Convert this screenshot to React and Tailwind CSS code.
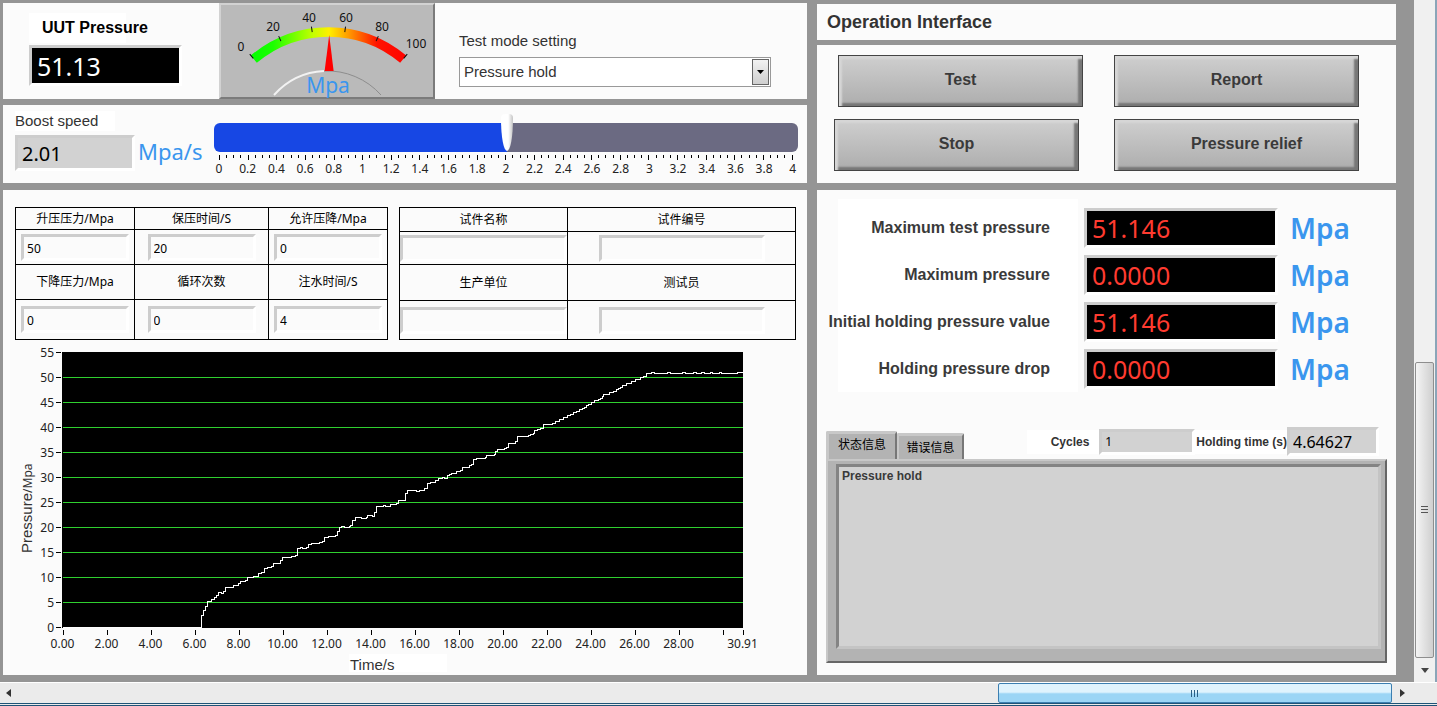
import { useState } from "react";

const ARIAL = "font-['Liberation_Sans',Arial,sans-serif]";
const SUNKEN = "border-3 border-t-[#cdcdcd] border-l-[#cdcdcd] border-r-white border-b-white";

const gaugeLabels = [
    { value: 0, x: 22, y: 48 },
    { value: 20, x: 54, y: 28 },
    { value: 40, x: 90, y: 19 },
    { value: 60, x: 127, y: 19 },
    { value: 80, x: 163, y: 28 },
    { value: 100, x: 197, y: 45 },
];

const results = [
    { id: "max-test", label: "Maximum test pressure", value: "51.146" },
    { id: "max", label: "Maximum pressure", value: "0.0000" },
    { id: "initial", label: "Initial holding pressure value", value: "51.146" },
    { id: "drop", label: "Holding pressure drop", value: "0.0000" },
];

const samples = [
    [605, 826], [611, 812], [616, 799], [623, 785], [635, 779], [643, 773], [649, 767], [655, 758], [663, 761],
    [670, 755], [676, 742], [700, 737], [716, 731], [722, 725], [737, 722], [743, 713], [760, 710], [776, 701],
    [785, 697], [793, 686], [803, 683], [815, 680], [820, 671], [842, 662], [848, 653], [874, 650], [887, 647],
    [893, 626], [902, 623], [908, 626], [920, 623], [926, 613], [934, 610], [959, 608], [967, 604], [974, 593],
    [986, 589], [1006, 586], [1013, 575], [1019, 563], [1025, 560], [1033, 563], [1048, 560], [1052, 556],
    [1058, 540], [1066, 533], [1084, 535], [1098, 532], [1103, 526], [1118, 529], [1124, 517], [1130, 499],
    [1150, 496], [1157, 499], [1170, 493], [1190, 490], [1196, 482], [1217, 460], [1222, 452], [1250, 454],
    [1258, 451], [1273, 446], [1282, 430], [1290, 427], [1306, 422], [1316, 416], [1327, 413], [1333, 415],
    [1342, 406], [1348, 403], [1355, 400], [1368, 394], [1382, 391], [1388, 382], [1407, 376], [1415, 373],
    [1421, 358], [1428, 355], [1455, 352], [1460, 346], [1482, 343], [1487, 334], [1493, 328], [1513, 325],
    [1519, 322], [1526, 310], [1545, 304], [1553, 290], [1585, 286], [1592, 283], [1600, 280], [1604, 271],
    [1612, 268], [1621, 265], [1631, 253], [1657, 250], [1665, 244], [1678, 238], [1690, 233], [1702, 227],
    [1711, 223], [1720, 218], [1729, 214], [1738, 208], [1747, 205], [1753, 202], [1760, 197], [1765, 192],
    [1775, 188], [1783, 181], [1795, 178], [1802, 175], [1808, 169], [1811, 163], [1828, 158], [1840, 155],
    [1848, 149], [1856, 146], [1862, 142], [1868, 136], [1880, 131], [1894, 124], [1906, 118], [1921, 112],
    [1930, 109], [1940, 100], [1954, 97], [1962, 100], [2002, 97], [2012, 100], [2047, 97], [2055, 100],
    [2080, 97], [2088, 100], [2105, 97], [2112, 100], [2131, 97], [2138, 100], [2158, 97], [2165, 100],
    [2212, 97], [2229, 97],
];

const snap = (n) => Math.floor(n) + 0.5;
const trace =
    "M60 287.5" + samples.map(([x, y]) => `H${snap(x / 3 - 3)}V${snap(y / 3)}`).join("");

const timeTicks = [0, 2, 4, 6, 8, 10, 12, 14, 16, 18, 20, 22, 24, 26, 28, 30, 30.91];
const pressureTicks = [0, 5, 10, 15, 20, 25, 30, 35, 40, 45, 50, 55];

function Gauge({ value }) {
    const needle = (value - 51) * 0.8;
    return (
        <svg
            viewBox="0 0 216 96"
            className="h-24 w-[216px] shrink-0 bg-[#bababa]"
            role="img"
            aria-label="Pressure gauge"
        >
            <defs>
                <linearGradient id="band" x1="30" x2="190" y1="0" y2="0" gradientUnits="userSpaceOnUse">
                    <stop offset="0" stopColor="#00ff00" />
                    <stop offset="0.15" stopColor="#1cff00" />
                    <stop offset="0.4" stopColor="#c4ff00" />
                    <stop offset="0.5" stopColor="#fff000" />
                    <stop offset="0.62" stopColor="#ff9c00" />
                    <stop offset="0.8" stopColor="#ff1400" />
                    <stop offset="1" stopColor="#ff0000" />
                </linearGradient>
            </defs>
            <path d="M0 96V0H216L214 2H2V94Z" fill="#d2d2d2" />
            <path d="M216 0V96H0L2 94H214V2Z" fill="#7b7b7b" />
            <path d="M34.8 56.2A116 116 0 0 1 184.2 56.2" fill="none" stroke="url(#band)" strokeWidth="9.5" />
            {gaugeLabels.map((l) => (
                <line
                    key={l.value}
                    x1="109.5"
                    x2="109.5"
                    y1="22.5"
                    y2="28"
                    stroke="#111"
                    transform={`rotate(${-40 + l.value * 0.8} 109.5 145)`}
                />
            ))}
            {gaugeLabels.map((l) => (
                <text key={l.value} x={l.x} y={l.y} fontSize="12" textAnchor="middle" fill="#111">
                    {l.value}
                </text>
            ))}
            <path d="M55 92A72 72 0 0 1 105 68" fill="none" stroke="#f2f2f2" strokeWidth="2" />
            <path d="M105 68A72 72 0 0 1 162 92" fill="none" stroke="#8d8d8d" />
            <path d="M110 32L114.500 68H105.500Z" fill="#ff0000" transform={`rotate(${needle} 109.5 145)`} />
            <text x="109" y="90" fontSize="21" textAnchor="middle" fill="#3a96ee">
                Mpa
            </text>
        </svg>
    );
}

function BoostSlider() {
    const [speed, setSpeed] = useState(2.01);
    const filled = (speed / 4) * 100;

    return (
        <div className="mr-[9px] flex-1 pt-[9px]">
            <input
                type="range"
                min="0"
                max="4"
                step="0.01"
                value={speed}
                aria-label="Boost speed setting"
                onChange={(e) => setSpeed(Number(e.target.value))}
                style={{ background: `linear-gradient(to right, #1747e4 ${filled}%, #6b6a82 ${filled}%)` }}
                className="mt-[9px] block h-[29px] w-full appearance-none rounded-md [&::-webkit-slider-runnable-track]:h-[29px] [&::-webkit-slider-thumb]:mt-[-9px] [&::-webkit-slider-thumb]:h-[37px] [&::-webkit-slider-thumb]:w-[12px] [&::-webkit-slider-thumb]:appearance-none [&::-webkit-slider-thumb]:rounded-[4px_4px_6px_6px/4px_4px_32px_32px] [&::-webkit-slider-thumb]:bg-linear-to-r [&::-webkit-slider-thumb]:from-white [&::-webkit-slider-thumb]:from-60% [&::-webkit-slider-thumb]:to-[#c4c4c4]"
            />
            <div className="mt-[3px] flex justify-between px-[5px]">
                {Array.from({ length: 81 }, (_, i) => (
                    <span key={i} className={`w-px bg-black ${i % 4 === 0 ? "h-[5px]" : "h-[3px]"}`}></span>
                ))}
            </div>
            <div className="mt-px flex justify-between px-[5px] text-xs text-[#222]">
                {Array.from({ length: 21 }, (_, i) => (
                    <span key={i} className="flex w-0 justify-center">
                        {Number((i * 0.2).toFixed(1))}
                    </span>
                ))}
            </div>
        </div>
    );
}

function Head({ id, children }) {
    return (
        <th className="border border-black p-0 font-normal">
            <label htmlFor={id}>{children}</label>
        </th>
    );
}

function Cell({ id, value = "", width }) {
    return (
        <td className="border border-black p-0">
            <input
                id={id}
                defaultValue={value}
                className={`mx-auto block h-[27px] bg-[#fbfbfb] pt-[2px] pl-[3px] ${width} ${SUNKEN}`}
            />
        </td>
    );
}

function Chart() {
    return (
        <svg viewBox="0 0 804 335" className="block w-full" role="img" aria-label="Pressure over time">
            <rect x="59" y="12" width="681" height="276" fill="#000" />
            {pressureTicks.map((p) => {
                const y = snap(287.5 - p * 5);
                return (
                    <g key={p}>
                        {p > 0 && p < 55 && (
                            <line x1="60" x2="740" y1={y} y2={y} stroke="#2fd02f" shapeRendering="crispEdges" />
                        )}
                        <line x1="53" x2="58" y1={y} y2={y} stroke="#000" shapeRendering="crispEdges" />
                        <text x="51" y={y + 4} fontSize="12" textAnchor="end" fill="#222">
                            {p}
                        </text>
                    </g>
                );
            })}
            {timeTicks.map((t) => {
                const x = snap(60 + t * 22);
                return (
                    <g key={t}>
                        <line x1={x} x2={x} y1="290" y2="295" stroke="#000" shapeRendering="crispEdges" />
                        {t !== 30 && (
                            <text x={x - 1} y="308" fontSize="12" textAnchor="middle" fill="#222">
                                {t.toFixed(2)}
                            </text>
                        )}
                    </g>
                );
            })}
            <path d={trace} fill="none" stroke="#fff" shapeRendering="crispEdges" />
            <rect x="346" y="314" width="98" height="18" fill="#fff" />
            <text x="347" y="330" fontSize="15" fill="#333" className={ARIAL}>
                Time/s
            </text>
            <text transform="rotate(-90 29 213)" x="29" y="213" fill="#333">
                <tspan fontSize="15" className={ARIAL}>Pressure</tspan>
                <tspan fontSize="12">/Mpa</tspan>
            </text>
        </svg>
    );
}

function PushButton({ children, labelClass = "" }) {
    return (
        <button
            type="button"
            className={`h-[52px] flex-1 border border-[#444] bg-linear-to-b from-[#cfcfcf] to-[#adadad] pb-[3px] text-base font-bold text-[#3a3a3a] shadow-[inset_3px_3px_2px_#d6d6d6,inset_-4px_-3px_2px_#777] ${ARIAL}`}
        >
            <span className={labelClass}>{children}</span>
        </button>
    );
}

function Grip({ className }) {
    return (
        <span className={`flex gap-[2px] ${className}`}>
            <i></i>
            <i></i>
            <i></i>
        </span>
    );
}

export default function App() {
    const [tab, setTab] = useState("status");

    return (
        <div className="flex min-h-screen flex-col bg-[#ebebeb] font-['Noto_Sans','Noto_Sans_CJK_SC',sans-serif] text-black">
            <div className="flex flex-1">
                <main className="grid flex-1 grid-cols-[804fr_579fr] gap-x-[10px] bg-[#959595] pt-[3px] pr-[18px] pb-[7px] pl-[3px]">
                    <div className="flex flex-col gap-[6px]">
                        <section className="flex bg-[#fbfbfb]">
                            <div className="w-[216px] pt-[10px] pl-[26px]">
                                <label
                                    htmlFor="uut"
                                    className={`block w-[97px] bg-white pl-[13px] text-base leading-[30px] font-bold whitespace-nowrap ${ARIAL}`}
                                >
                                    UUT Pressure
                                </label>
                                <input
                                    id="uut"
                                    readOnly
                                    value="51.13"
                                    className={`mt-[2px] block h-[41px] w-[153px] bg-black pl-[5px] text-[25px] text-white ${SUNKEN}`}
                                />
                            </div>
                            <Gauge value={51.13} />
                            <div className="flex-1 pt-7 pr-9 pl-6">
                                <label htmlFor="mode" className={`block text-[15px] leading-5 text-[#333] ${ARIAL}`}>
                                    Test mode setting
                                </label>
                                <div className="relative mt-[6px]">
                                    <select
                                        id="mode"
                                        className={`block h-[30px] w-full appearance-none border border-[#999] bg-white pl-1 text-[15px] text-[#333] ${ARIAL}`}
                                    >
                                        <option>Pressure hold</option>
                                    </select>
                                    <span className="pointer-events-none absolute top-[2px] right-[2px] flex h-[26px] w-[17px] items-center justify-center border border-[#666] bg-linear-to-b from-[#f2f2f2] to-[#cfcfcf]">
                                        <svg viewBox="0 0 7 4" className="w-[7px]">
                                            <path d="M0 0H7L3.500 4Z" />
                                        </svg>
                                    </span>
                                </div>
                            </div>
                        </section>

                        <section className="flex h-[78px] bg-[#fbfbfb]">
                            <div className="w-[211px] pt-[6px] pl-3">
                                <label htmlFor="boost" className={`block w-[100px] bg-white text-[15px] leading-5 text-[#333] ${ARIAL}`}>
                                    Boost speed
                                </label>
                                <div className="mt-1 flex items-center gap-[3px]">
                                    <input
                                        id="boost"
                                        readOnly
                                        value="2.01"
                                        className={`h-9 w-[120px] bg-[#d2d2d2] pl-1 text-xl ${SUNKEN}`}
                                    />
                                    <span className="pb-1 text-[22px] leading-8 text-[#3a96ee]">Mpa/s</span>
                                </div>
                            </div>
                            <BoostSlider />
                        </section>

                        <section className="mt-px flex-1 bg-[#fbfbfb]">
                            <div className="flex gap-[11px] pt-[17px] pr-[11px] pl-3 text-xs">
                                <table className="flex-[373] table-fixed border-collapse">
                                    <colgroup>
                                        <col className="w-[32%]" />
                                        <col className="w-[36%]" />
                                        <col className="w-[32%]" />
                                    </colgroup>
                                    <tbody>
                                        <tr className="h-[22px]">
                                            <Head id="rise">升压压力/Mpa</Head>
                                            <Head id="hold">保压时间/S</Head>
                                            <Head id="allow">允许压降/Mpa</Head>
                                        </tr>
                                        <tr className="h-[35px]">
                                            <Cell id="rise" value="50" width="w-[108px]" />
                                            <Cell id="hold" value="20" width="w-[108px]" />
                                            <Cell id="allow" value="0" width="w-[108px]" />
                                        </tr>
                                        <tr className="h-[35px]">
                                            <Head id="fall">下降压力/Mpa</Head>
                                            <Head id="loops">循环次数</Head>
                                            <Head id="fill">注水时间/S</Head>
                                        </tr>
                                        <tr className="h-10">
                                            <Cell id="fall" value="0" width="w-[108px]" />
                                            <Cell id="loops" value="0" width="w-[108px]" />
                                            <Cell id="fill" value="4" width="w-[108px]" />
                                        </tr>
                                    </tbody>
                                </table>
                                <table className="flex-[397] table-fixed border-collapse">
                                    <colgroup>
                                        <col className="w-[168px]" />
                                        <col />
                                    </colgroup>
                                    <tbody>
                                        <tr className="h-[24px]">
                                            <Head id="part">试件名称</Head>
                                            <Head id="serial">试件编号</Head>
                                        </tr>
                                        <tr className="h-[33px]">
                                            <Cell id="part" width="w-full" />
                                            <Cell id="serial" width="w-[166px]" />
                                        </tr>
                                        <tr className="h-[36px]">
                                            <Head id="maker">生产单位</Head>
                                            <Head id="tester">测试员</Head>
                                        </tr>
                                        <tr className="h-[39px]">
                                            <Cell id="maker" width="w-full" />
                                            <Cell id="tester" width="w-[166px]" />
                                        </tr>
                                    </tbody>
                                </table>
                            </div>
                            <Chart />
                        </section>
                    </div>

                    <div className="flex flex-col gap-[6px]">
                        <h1 className={`mt-px bg-[#fbfbfb] pl-[10px] text-lg leading-[35px] font-bold text-[#333] ${ARIAL}`}>
                            <span className="inline-block pt-px">Operation Interface</span>
                        </h1>

                        <section className="-mt-px flex h-[138px] flex-col gap-3 bg-[#fbfbfb] pt-[10px] pr-[37px]">
                            <div className="flex gap-[31px] pl-[21px]">
                                <PushButton>Test</PushButton>
                                <PushButton>Report</PushButton>
                            </div>
                            <div className="flex gap-[35px] pl-[17px]">
                                <PushButton>Stop</PushButton>
                                <PushButton labelClass="pl-5">Pressure relief</PushButton>
                            </div>
                        </section>

                        <section className="mt-px flex flex-1 flex-col bg-[#fbfbfb] pt-[9px] pr-[9px] pb-3 pl-[9px]">
                            <div>
                                {results.map((r) => (
                                    <div key={r.id} className="flex h-[47px] items-stretch pl-3 first:h-[52px] first:[&>*]:pt-[5px]">
                                        <label
                                            htmlFor={r.id}
                                            className={`flex w-[240px] items-center justify-end bg-white pr-7 text-base font-bold whitespace-nowrap text-[#3a3a3a] ${ARIAL}`}
                                        >
                                            {r.label}
                                        </label>
                                        <div className="flex items-center pl-[6px]">
                                            <input
                                                id={r.id}
                                                readOnly
                                                value={r.value}
                                                className={`h-10 w-[194px] bg-black pl-[5px] text-[25px] text-[#ff3b30] ${SUNKEN}`}
                                            />
                                        </div>
                                        <div className="flex items-center pl-3 text-[28px] leading-8 font-semibold text-[#3a96ee]">
                                            Mpa
                                        </div>
                                    </div>
                                ))}
                            </div>

                            <div className="mt-[35px] flex h-[32px] items-end">
                                <button
                                    type="button"
                                    onClick={() => setTab("status")}
                                    className="h-[28px] w-[71px] rounded-t-xs border-t-3 border-r-2 border-l-3 border-t-[#c8c8c8] border-r-[#777] border-l-[#c8c8c8] bg-[#b3b3b3] pb-1 text-xs"
                                >
                                    状态信息
                                </button>
                                <button
                                    type="button"
                                    onClick={() => setTab("errors")}
                                    className="h-[26px] w-[67px] rounded-t-xs border-t-3 border-r-2 border-l-2 border-t-[#c8c8c8] border-r-[#777] border-l-[#c8c8c8] bg-[#b3b3b3] text-xs"
                                >
                                    错误信息
                                </button>
                                <div className="ml-auto flex items-center self-start pr-2">
                                    <label htmlFor="cycles" className={`bg-white pr-[10px] pl-6 text-xs leading-6 font-bold text-[#333] ${ARIAL}`}>
                                        Cycles
                                    </label>
                                    <input
                                        id="cycles"
                                        readOnly
                                        value="1"
                                        className={`h-[26px] w-[96px] bg-[#d2d2d2] pl-[3px] text-xs ${SUNKEN}`}
                                    />
                                    <label htmlFor="elapsed" className={`bg-white pl-px text-xs leading-6 font-bold text-[#333] ${ARIAL}`}>
                                        Holding time (s)
                                    </label>
                                    <input
                                        id="elapsed"
                                        readOnly
                                        value="4.64627"
                                        className={`h-[29px] w-[92px] bg-[#d2d2d2] pl-[3px] text-base ${SUNKEN}`}
                                    />
                                </div>
                            </div>
                            <div className="flex flex-1 border-2 border-t-[#c8c8c8] border-r-[#666] border-b-[#666] border-l-[#c8c8c8] bg-[#b3b3b3] pt-[3px] pr-1 pb-3 pl-2">
                                <textarea
                                    readOnly
                                    aria-label="Messages"
                                    value={tab === "status" ? "Pressure hold" : ""}
                                    className={`flex-1 resize-none border-3 border-t-[#848484] border-r-[#c4c4c4] border-b-[#c4c4c4] border-l-[#848484] bg-[#d2d2d2] pt-px pl-[3px] text-xs font-bold text-[#3a3a3a] ${ARIAL}`}
                                />
                            </div>
                        </section>
                    </div>
                </main>

                <div className="flex w-[23px] flex-col border-r-2 border-r-[#8aa5b8] bg-[#f0f0f0] px-px">
                    <div className="flex-[363]"></div>
                    <div className="flex flex-[295] items-center justify-center rounded-xs border border-[#8e8e8e] bg-linear-to-r from-[#f4f4f4] to-[#cfcfcf]">
                        <Grip className="flex-col [&>i]:h-px [&>i]:w-[7px] [&>i]:bg-[#555]" />
                    </div>
                    <button type="button" aria-label="Scroll down" className="flex h-6 items-center justify-center">
                        <svg viewBox="0 0 8 5" className="w-2">
                            <path d="M0 0H8L4 5Z" fill="#444" />
                        </svg>
                    </button>
                </div>
            </div>

            <div className="flex h-6 border-t border-b-3 border-t-white border-b-[#1f5377] bg-[#ebebeb] pr-6 [border-bottom-style:double]">
                <button type="button" aria-label="Scroll left" className="flex w-[17px] items-center justify-center">
                    <svg viewBox="0 0 5 8" className="h-2">
                        <path d="M5 0V8L0 4Z" fill="#333" />
                    </svg>
                </button>
                <div className="flex-[982]"></div>
                <div className="flex flex-[393] items-center justify-center rounded-xs border border-[#3c7fb1] bg-linear-to-b from-[#dff3fd] from-45% to-[#9bd5f5] to-55%">
                    <Grip className="[&>i]:h-[7px] [&>i]:w-px [&>i]:bg-[#2b5f86]" />
                </div>
                <button type="button" aria-label="Scroll right" className="flex w-[21px] items-center justify-center">
                    <svg viewBox="0 0 5 8" className="h-2">
                        <path d="M0 0V8L5 4Z" fill="#333" />
                    </svg>
                </button>
            </div>
        </div>
    );
}
